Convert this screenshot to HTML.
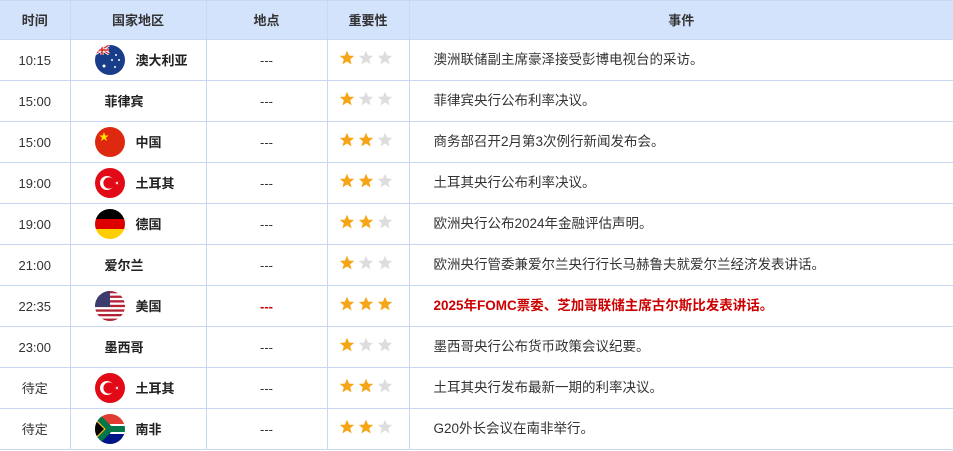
<!DOCTYPE html><html><head><meta charset="utf-8"><style>
*{margin:0;padding:0;box-sizing:border-box}
body{width:953px;height:451px;background:#fff;font-family:"Liberation Sans","Noto Sans CJK SC",sans-serif;font-size:13px;color:#333;overflow:hidden}
table{border-collapse:collapse;position:absolute;left:0;top:0;width:953px;table-layout:fixed}
td,th{border:1px solid #c8d8f4;height:41px;text-align:center;padding:0;line-height:1;vertical-align:middle}
th{height:39px;background:#d4e3fc;font-weight:bold;color:#333;font-size:13px}
tr td:first-child,tr th:first-child{border-left:none}
tr td:last-child,tr th:last-child{border-right:none}
.c{display:flex;align-items:center;padding-left:24px;font-weight:bold;color:#222;height:30px}
.c svg{margin-right:11px;flex:none}
.c.nf{padding-left:34px}
.ev{text-align:left;padding-left:24px;font-size:13.5px}
.red{color:#c00;font-weight:bold}
.st{display:flex;gap:3px;justify-content:center;margin-left:-4px;margin-top:-4px}
</style></head><body>
<svg width="0" height="0" style="position:absolute"><defs>
<symbol id="s" viewBox="0 0 20 20"><polygon points="10,1 12.6,7 19,7.3 14,11.5 15.7,18 10,14.4 4.3,18 6,11.5 1,7.3 7.4,7"/></symbol>
<clipPath id="cc"><circle cx="15" cy="15" r="15"/></clipPath>
</defs></svg>
<table>
<colgroup><col style="width:70px"><col style="width:136px"><col style="width:121px"><col style="width:82px"><col></colgroup>
<tr><th>时间</th><th>国家地区</th><th>地点</th><th>重要性</th><th>事件</th></tr>
<tr><td>10:15</td><td><div class="c"><svg width="30" height="30"><g clip-path="url(#cc)"><rect width="30" height="30" fill="#1a3d8a"/><path d="M0 0L14 9M14 0L0 9" stroke="#fff" stroke-width="3"/><path d="M0 0L14 9M14 0L0 9" stroke="#d22" stroke-width="1.2"/><path d="M7 0V10M0 5H14" stroke="#fff" stroke-width="3"/><path d="M7 0V10M0 5H14" stroke="#d22" stroke-width="1.6"/><circle cx="9" cy="21" r="1.5" fill="#fff"/><circle cx="21" cy="10" r="1" fill="#fff"/><circle cx="24" cy="15" r="1" fill="#fff"/><circle cx="20" cy="22" r="1" fill="#fff"/><circle cx="17" cy="15" r="1" fill="#fff"/></g></svg>澳大利亚</div></td><td>---</td><td><div class="st"><svg width="16" height="16" fill="#f5a515"><use href="#s"/></svg><svg width="16" height="16" fill="#ddd"><use href="#s"/></svg><svg width="16" height="16" fill="#ddd"><use href="#s"/></svg></div></td><td class="ev">澳洲联储副主席豪泽接受彭博电视台的采访。</td></tr>
<tr><td>15:00</td><td><div class="c nf">菲律宾</div></td><td>---</td><td><div class="st"><svg width="16" height="16" fill="#f5a515"><use href="#s"/></svg><svg width="16" height="16" fill="#ddd"><use href="#s"/></svg><svg width="16" height="16" fill="#ddd"><use href="#s"/></svg></div></td><td class="ev">菲律宾央行公布利率决议。</td></tr>
<tr><td>15:00</td><td><div class="c"><svg width="30" height="30"><circle cx="15" cy="15" r="15" fill="#de2910"/><polygon points="9,5 10.2,8.5 13.8,8.5 10.9,10.6 12,14 9,12 6,14 7.1,10.6 4.2,8.5 7.8,8.5" fill="#ffde00"/></svg>中国</div></td><td>---</td><td><div class="st"><svg width="16" height="16" fill="#f5a515"><use href="#s"/></svg><svg width="16" height="16" fill="#f5a515"><use href="#s"/></svg><svg width="16" height="16" fill="#ddd"><use href="#s"/></svg></div></td><td class="ev">商务部召开2月第3次例行新闻发布会。</td></tr>
<tr><td>19:00</td><td><div class="c"><svg width="30" height="30"><circle cx="15" cy="15" r="15" fill="#e30a17"/><circle cx="12" cy="15" r="7" fill="#fff"/><circle cx="14" cy="15" r="5.6" fill="#e30a17"/><polygon points="20,15 23.5,13.5 21.5,16.8 21.5,13.2 23.5,16.5" fill="#fff"/></svg>土耳其</div></td><td>---</td><td><div class="st"><svg width="16" height="16" fill="#f5a515"><use href="#s"/></svg><svg width="16" height="16" fill="#f5a515"><use href="#s"/></svg><svg width="16" height="16" fill="#ddd"><use href="#s"/></svg></div></td><td class="ev">土耳其央行公布利率决议。</td></tr>
<tr><td>19:00</td><td><div class="c"><svg width="30" height="30"><g clip-path="url(#cc)"><rect width="30" height="10" fill="#000"/><rect y="10" width="30" height="10" fill="#dd0000"/><rect y="20" width="30" height="10" fill="#ffce00"/></g></svg>德国</div></td><td>---</td><td><div class="st"><svg width="16" height="16" fill="#f5a515"><use href="#s"/></svg><svg width="16" height="16" fill="#f5a515"><use href="#s"/></svg><svg width="16" height="16" fill="#ddd"><use href="#s"/></svg></div></td><td class="ev">欧洲央行公布2024年金融评估声明。</td></tr>
<tr><td>21:00</td><td><div class="c nf">爱尔兰</div></td><td>---</td><td><div class="st"><svg width="16" height="16" fill="#f5a515"><use href="#s"/></svg><svg width="16" height="16" fill="#ddd"><use href="#s"/></svg><svg width="16" height="16" fill="#ddd"><use href="#s"/></svg></div></td><td class="ev">欧洲央行管委兼爱尔兰央行行长马赫鲁夫就爱尔兰经济发表讲话。</td></tr>
<tr><td>22:35</td><td><div class="c"><svg width="30" height="30"><g clip-path="url(#cc)"><rect width="30" height="30" fill="#fff"/><g fill="#b22234"><rect y="0" width="30" height="2.3"/><rect y="4.6" width="30" height="2.3"/><rect y="9.2" width="30" height="2.3"/><rect y="13.8" width="30" height="2.3"/><rect y="18.4" width="30" height="2.3"/><rect y="23" width="30" height="2.3"/><rect y="27.6" width="30" height="2.4"/></g><rect width="15" height="16" fill="#3c3b6e"/></g></svg>美国</div></td><td class="red">---</td><td><div class="st"><svg width="16" height="16" fill="#f5a515"><use href="#s"/></svg><svg width="16" height="16" fill="#f5a515"><use href="#s"/></svg><svg width="16" height="16" fill="#f5a515"><use href="#s"/></svg></div></td><td class="ev red">2025年FOMC票委、芝加哥联储主席古尔斯比发表讲话。</td></tr>
<tr><td>23:00</td><td><div class="c nf">墨西哥</div></td><td>---</td><td><div class="st"><svg width="16" height="16" fill="#f5a515"><use href="#s"/></svg><svg width="16" height="16" fill="#ddd"><use href="#s"/></svg><svg width="16" height="16" fill="#ddd"><use href="#s"/></svg></div></td><td class="ev">墨西哥央行公布货币政策会议纪要。</td></tr>
<tr><td>待定</td><td><div class="c"><svg width="30" height="30"><circle cx="15" cy="15" r="15" fill="#e30a17"/><circle cx="12" cy="15" r="7" fill="#fff"/><circle cx="14" cy="15" r="5.6" fill="#e30a17"/><polygon points="20,15 23.5,13.5 21.5,16.8 21.5,13.2 23.5,16.5" fill="#fff"/></svg>土耳其</div></td><td>---</td><td><div class="st"><svg width="16" height="16" fill="#f5a515"><use href="#s"/></svg><svg width="16" height="16" fill="#f5a515"><use href="#s"/></svg><svg width="16" height="16" fill="#ddd"><use href="#s"/></svg></div></td><td class="ev">土耳其央行发布最新一期的利率决议。</td></tr>
<tr><td>待定</td><td><div class="c"><svg width="30" height="30"><g clip-path="url(#cc)"><rect width="30" height="15" fill="#e03c31"/><rect y="15" width="30" height="15" fill="#001489"/><path d="M0 0L15 15L0 30Z" fill="#fff"/><path d="M0 3L12 15L0 27Z" fill="#ffb81c"/><path d="M15 15H30" stroke="#fff" stroke-width="10"/><path d="M0 0L15 15L0 30M15 15H30" stroke="#007749" stroke-width="6" fill="none"/><path d="M0 6L9 15L0 24Z" fill="#000"/></g></svg>南非</div></td><td>---</td><td><div class="st"><svg width="16" height="16" fill="#f5a515"><use href="#s"/></svg><svg width="16" height="16" fill="#f5a515"><use href="#s"/></svg><svg width="16" height="16" fill="#ddd"><use href="#s"/></svg></div></td><td class="ev">G20外长会议在南非举行。</td></tr>
</table>
</body></html>
